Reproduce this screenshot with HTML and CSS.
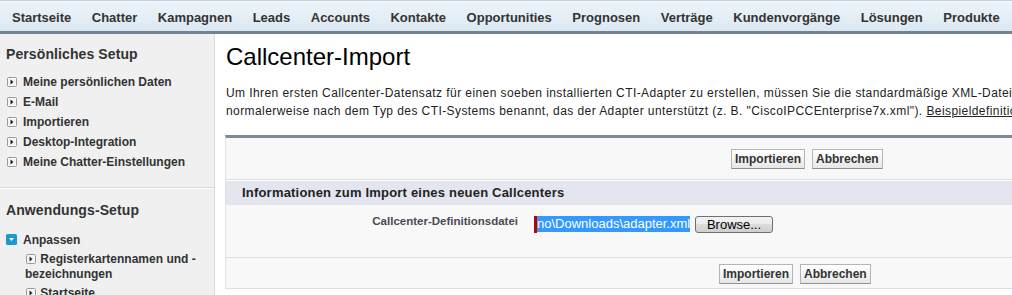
FILE: index.html
```html
<!DOCTYPE html>
<html lang="de">
<head>
<meta charset="utf-8">
<title>Callcenter-Import</title>
<link rel="stylesheet" href="styles.css">
</head>
<body>
<nav class="tabs">
  <a class="tab">Startseite</a>
  <a class="tab">Chatter</a>
  <a class="tab">Kampagnen</a>
  <a class="tab">Leads</a>
  <a class="tab">Accounts</a>
  <a class="tab">Kontakte</a>
  <a class="tab">Opportunities</a>
  <a class="tab">Prognosen</a>
  <a class="tab">Verträge</a>
  <a class="tab">Kundenvorgänge</a>
  <a class="tab">Lösungen</a>
  <a class="tab">Produkte</a>
</nav>
<div class="main">
  <aside class="sidebar">
    <section class="module">
      <h2 class="module-title">Persönliches Setup</h2>
      <ul class="nav-list">
        <li class="nav-item"><svg class="ico" width="10" height="10" viewBox="0 0 10 10"><rect x="0.5" y="0.5" width="9" height="9" rx="1" fill="#f6f6f6" stroke="#9a9a9a"/><polygon points="3.5,2.5 6.5,5 3.5,7.5" fill="#222"/></svg>Meine persönlichen Daten</li>
        <li class="nav-item"><svg class="ico" width="10" height="10" viewBox="0 0 10 10"><rect x="0.5" y="0.5" width="9" height="9" rx="1" fill="#f6f6f6" stroke="#9a9a9a"/><polygon points="3.5,2.5 6.5,5 3.5,7.5" fill="#222"/></svg>E-Mail</li>
        <li class="nav-item"><svg class="ico" width="10" height="10" viewBox="0 0 10 10"><rect x="0.5" y="0.5" width="9" height="9" rx="1" fill="#f6f6f6" stroke="#9a9a9a"/><polygon points="3.5,2.5 6.5,5 3.5,7.5" fill="#222"/></svg>Importieren</li>
        <li class="nav-item"><svg class="ico" width="10" height="10" viewBox="0 0 10 10"><rect x="0.5" y="0.5" width="9" height="9" rx="1" fill="#f6f6f6" stroke="#9a9a9a"/><polygon points="3.5,2.5 6.5,5 3.5,7.5" fill="#222"/></svg>Desktop-Integration</li>
        <li class="nav-item"><svg class="ico" width="10" height="10" viewBox="0 0 10 10"><rect x="0.5" y="0.5" width="9" height="9" rx="1" fill="#f6f6f6" stroke="#9a9a9a"/><polygon points="3.5,2.5 6.5,5 3.5,7.5" fill="#222"/></svg>Meine Chatter-Einstellungen</li>
      </ul>
    </section>
    <section class="module module-second">
      <h2 class="module-title">Anwendungs-Setup</h2>
      <ul class="nav-list">
        <li class="nav-item"><svg class="ico ico-open" width="11" height="11" viewBox="0 0 11 11"><rect x="0" y="0" width="11" height="11" rx="1.5" fill="#1a9ad0"/><polygon points="3,4 8,4 5.5,7" fill="#fff"/></svg>Anpassen
          <ul class="sub-list">
            <li class="sub-item"><svg class="ico" width="10" height="10" viewBox="0 0 10 10"><rect x="0.5" y="0.5" width="9" height="9" rx="1" fill="#f6f6f6" stroke="#9a9a9a"/><polygon points="3.5,2.5 6.5,5 3.5,7.5" fill="#222"/></svg> Registerkartennamen und -bezeichnungen</li>
            <li class="sub-item"><svg class="ico" width="10" height="10" viewBox="0 0 10 10"><rect x="0.5" y="0.5" width="9" height="9" rx="1" fill="#f6f6f6" stroke="#9a9a9a"/><polygon points="3.5,2.5 6.5,5 3.5,7.5" fill="#222"/></svg> Startseite</li>
          </ul>
        </li>
      </ul>
    </section>
  </aside>
  <main class="content">
    <h1 class="page-title">Callcenter-Import</h1>
    <p class="intro">Um Ihren ersten Callcenter-Datensatz für einen soeben installierten CTI-Adapter zu erstellen, müssen Sie die standardmäßige XML-Datei importieren, die mit dem Adapter geliefert wurde. Diese Datei ist<br>normalerweise nach dem Typ des CTI-Systems benannt, das der Adapter unterstützt (z. B. "CiscoIPCCEnterprise7x.xml"). <a class="link">Beispieldefinitionsdatei</a></p>
    <div class="panel">
      <div class="btn-row btn-row-top">
        <button class="btn">Importieren</button>
        <button class="btn">Abbrechen</button>
      </div>
      <h3 class="subheader">Informationen zum Import eines neuen Callcenters</h3>
      <div class="field-row">
        <label class="field-label">Callcenter-Definitionsdatei</label>
        <div class="field-data">
          <span class="required"></span>
          <span class="file-path">no\Downloads\adapter.xml</span>
          <span class="browse">Browse...</span>
        </div>
      </div>
      <div class="btn-row btn-row-bottom">
        <button class="btn">Importieren</button>
        <button class="btn">Abbrechen</button>
      </div>
    </div>
  </main>
</div>
</body>
</html>
```
FILE: styles.css
```css
html, body {
  margin: 0;
  padding: 0;
  overflow: hidden;
  background: #ffffff;
  font-family: "Liberation Sans", Arial, sans-serif;
  color: #222;
}

.tabs {
  display: flex;
  gap: 20.5px;
  height: 21px;
  padding: 9px 0 0 12px;
  border-top: 1px solid #c3d3e0;
  border-bottom: 3px solid #76828f;
  background: linear-gradient(#eef5fa, #dbe8f2);
  white-space: nowrap;
}

.tab {
  font-size: 13px;
  font-weight: bold;
  line-height: 16px;
  color: #333;
}

.main {
  display: flex;
  align-items: stretch;
  min-height: 261px;
}

.sidebar {
  flex: 0 0 215px;
  width: 215px;
  background: #f0f0f0;
  border-right: 1px solid #dadada;
  box-sizing: border-box;
}

.module {
  padding: 11px 8px 15px 6px;
}

.module-second {
  border-top: 1px solid #d8d8d8;
  box-shadow: inset 0 1px 0 #ffffff;
  padding-top: 13px;
}

.module-title {
  margin: 0 0 9px;
  font-size: 14px;
  font-weight: bold;
  line-height: 18px;
  color: #333;
  letter-spacing: 0.1px;
}

.module-second .module-title {
  margin-bottom: 11px;
}

.nav-list,
.sub-list {
  list-style: none;
  margin: 0;
  padding: 0;
}

.nav-item {
  font-size: 12px;
  font-weight: bold;
  line-height: 15px;
  padding: 2.5px 0;
  color: #333;
}

.ico {
  display: inline-block;
  vertical-align: -1px;
  margin: 0 6px 0 1px;
}

.ico-open {
  margin: 0 6px 0 0;
}

.sub-list {
  padding-left: 19px;
  margin-top: 2px;
}

.sub-item {
  padding: 2px 0;
}

.sub-item .ico {
  margin: 0 1px 0 1px;
}

.content {
  flex: 1 1 auto;
  min-width: 0;
  padding: 9px 0 0 10px;
  overflow: hidden;
}

.page-title {
  margin: 0 0 13px 1px;
  font-size: 24px;
  font-weight: normal;
  line-height: 28px;
  color: #000;
  white-space: nowrap;
}

.intro {
  margin: 0 0 15px 1px;
  font-size: 12px;
  line-height: 18px;
  letter-spacing: 0.42px;
  color: #222;
  white-space: nowrap;
}

.link {
  color: #222;
  text-decoration: underline;
}

.panel {
  width: 1300px;
  background: #f8f8f8;
  border-top: 3px solid #7d899a;
  border-left: 1px solid #e2e2e2;
  border-bottom: 1px solid #dedede;
}

.btn-row {
  display: flex;
  gap: 7px;
}

.btn-row-top {
  padding: 11px 0 10px 505px;
  border-bottom: 1px solid #dcdcdc;
}

.btn-row-bottom {
  padding: 6px 0 4px 493px;
  border-top: 1px solid #dcdcdc;
}

.btn {
  height: 20px;
  padding: 0 3px;
  font-family: "Liberation Sans", Arial, sans-serif;
  font-size: 12px;
  font-weight: bold;
  line-height: 18px;
  color: #333;
  background: linear-gradient(#ffffff, #f1f1f1 60%, #e6e6e6);
  border: 1px solid #b5b5b5;
  border-bottom-color: #8f8f8f;
  border-radius: 0;
}

.subheader {
  margin: 0;
  height: 24px;
  padding-left: 16px;
  font-size: 13px;
  font-weight: bold;
  line-height: 24px;
  letter-spacing: 0.2px;
  color: #222;
  background: #e3e6ee;
  border-top: 1px solid #ffffff;
}

.field-row {
  display: grid;
  grid-template-columns: 292px auto;
  column-gap: 16px;
  padding: 10px 0 24px;
}

.field-label {
  text-align: right;
  font-size: 11.5px;
  font-weight: bold;
  line-height: 13px;
  color: #4a4a56;
}

.field-data {
  display: flex;
  align-items: flex-start;
  padding-top: 1px;
}

.required {
  width: 3px;
  height: 17px;
  background: #c00000;
}

.file-path {
  width: 153px;
  height: 16px;
  overflow: hidden;
  font-size: 13px;
  line-height: 16px;
  color: #fff;
  background: #3399ff;
  white-space: nowrap;
}

.browse {
  margin-left: 5px;
  width: 76px;
  height: 15px;
  font-size: 13px;
  line-height: 15px;
  text-align: center;
  color: #000;
  border: 1px solid #707070;
  border-radius: 3px;
  background: linear-gradient(#f2f2f2, #ebebeb 50%, #dddddd 50%, #cfcfcf);
}
```
